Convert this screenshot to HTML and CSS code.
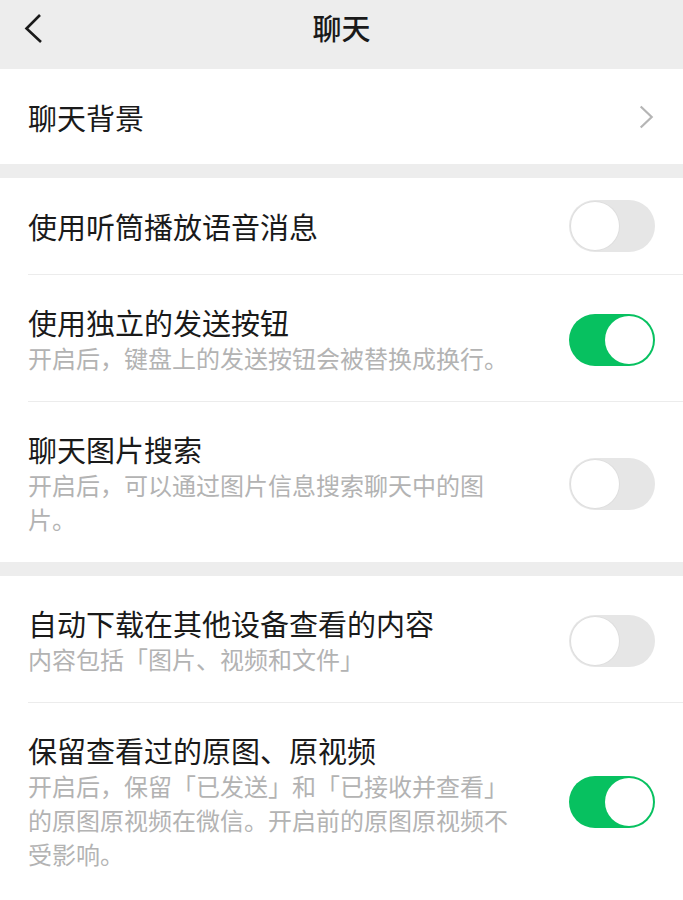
FILE: index.html
```html
<!DOCTYPE html>
<html lang="zh-CN">
<head>
    <meta charset="UTF-8">
    <meta name="viewport" content="width=device-width, initial-scale=1.0">
    <title>聊天</title>
    <link rel="stylesheet" href="styles.css">
</head>
<body>
    <div class="page">
        <div class="topbar">
            <div class="back">
                <svg width="24" height="34" viewBox="0 0 24 34">
                    <path d="M18 3 L4.5 16.5 L19 30" fill="none" stroke="#1a1a1a" stroke-width="2.6"/>
                </svg>
            </div>
            <h1 class="title">聊天</h1>
            <div></div>
        </div>

        <div class="group">
            <div class="row single first">
                <div class="text">
                    <p class="label">聊天背景</p>
                </div>
                <svg class="arrow" width="16" height="24" viewBox="0 0 16 24">
                    <path d="M1.7 1.5 L12.7 12 L1.7 22.5" fill="none" stroke="#b5b5b5" stroke-width="2.2"/>
                </svg>
            </div>
        </div>

        <div class="group">
            <div class="row single">
                <div class="text">
                    <p class="label">使用听筒播放语音消息</p>
                </div>
                <div class="switch"><span class="knob"></span></div>
            </div>
            <div class="row">
                <div class="text">
                    <p class="label">使用独立的发送按钮</p>
                    <p class="desc">开启后，键盘上的发送按钮会被替换成换行。</p>
                </div>
                <div class="switch on"><span class="knob"></span></div>
            </div>
            <div class="row">
                <div class="text">
                    <p class="label">聊天图片搜索</p>
                    <p class="desc">开启后，可以通过图片信息搜索聊天中的图片。</p>
                </div>
                <div class="switch"><span class="knob"></span></div>
            </div>
        </div>

        <div class="group last">
            <div class="row">
                <div class="text">
                    <p class="label">自动下载在其他设备查看的内容</p>
                    <p class="desc">内容包括「图片、视频和文件」</p>
                </div>
                <div class="switch"><span class="knob"></span></div>
            </div>
            <div class="row">
                <div class="text">
                    <p class="label">保留查看过的原图、原视频</p>
                    <p class="desc">开启后，保留「已发送」和「已接收并查看」的原图原视频在微信。开启前的原图原视频不受影响。</p>
                </div>
                <div class="switch on"><span class="knob"></span></div>
            </div>
        </div>
    </div>
</body>
</html>
```

FILE: styles.css
```css
html{
    background: #ededed;
}

body{
    margin: 0;
    font-family: "Noto Sans CJK SC", sans-serif;
    color: #1a1a1a;
}

p, h1{
    margin: 0;
}

.page{
    min-height: 100vh;
    display: flex;
    flex-direction: column;
}

/* top bar */
.topbar{
    height: 69px;
    box-sizing: border-box;
    padding-top: 10px;
    display: grid;
    grid-template-columns: 1fr auto 1fr;
    align-items: start;
}

.back svg{
    display: block;
    margin: 2px 0 0 22px;
}

.title{
    font-size: 29px;
    line-height: 34px;
    font-weight: 500;
}

/* groups and rows */
.group{
    background: #fff;
    padding-left: 28px;
    margin-bottom: 14px;
}

.group.last{
    flex: 1;
    margin-bottom: 0;
}

.row{
    display: flex;
    align-items: center;
    padding: 30px 28px 26px 0;
}

.row + .row{
    border-top: 1px solid #ececec;
}

/* one-line row: the switch sets the height */
.row.single{
    padding: 22px 28px 22px 0;
}

.row.single.first{
    padding: 31px 28px 30px 0;
}

.text{
    flex: 1;
}

.label{
    font-size: 29px;
    line-height: 34px;
}

.desc{
    margin-top: 2px;
    max-width: 492px;
    font-size: 24px;
    line-height: 34px;
    color: #b3b3b3;
}

.arrow{
    display: block;
}

/* switch */
.switch{
    position: relative;
    flex: none;
    width: 86px;
    height: 52px;
    border-radius: 26px;
    background: #e6e6e6;
}

.knob{
    position: absolute;
    top: 2px;
    left: 2px;
    width: 48px;
    height: 48px;
    border-radius: 50%;
    background: #fff;
    box-shadow: 0 0 0 1px #dedede;
}

.switch.on{
    background: #07c160;
}

.switch.on .knob{
    left: 36px;
    box-shadow: none;
}
```
